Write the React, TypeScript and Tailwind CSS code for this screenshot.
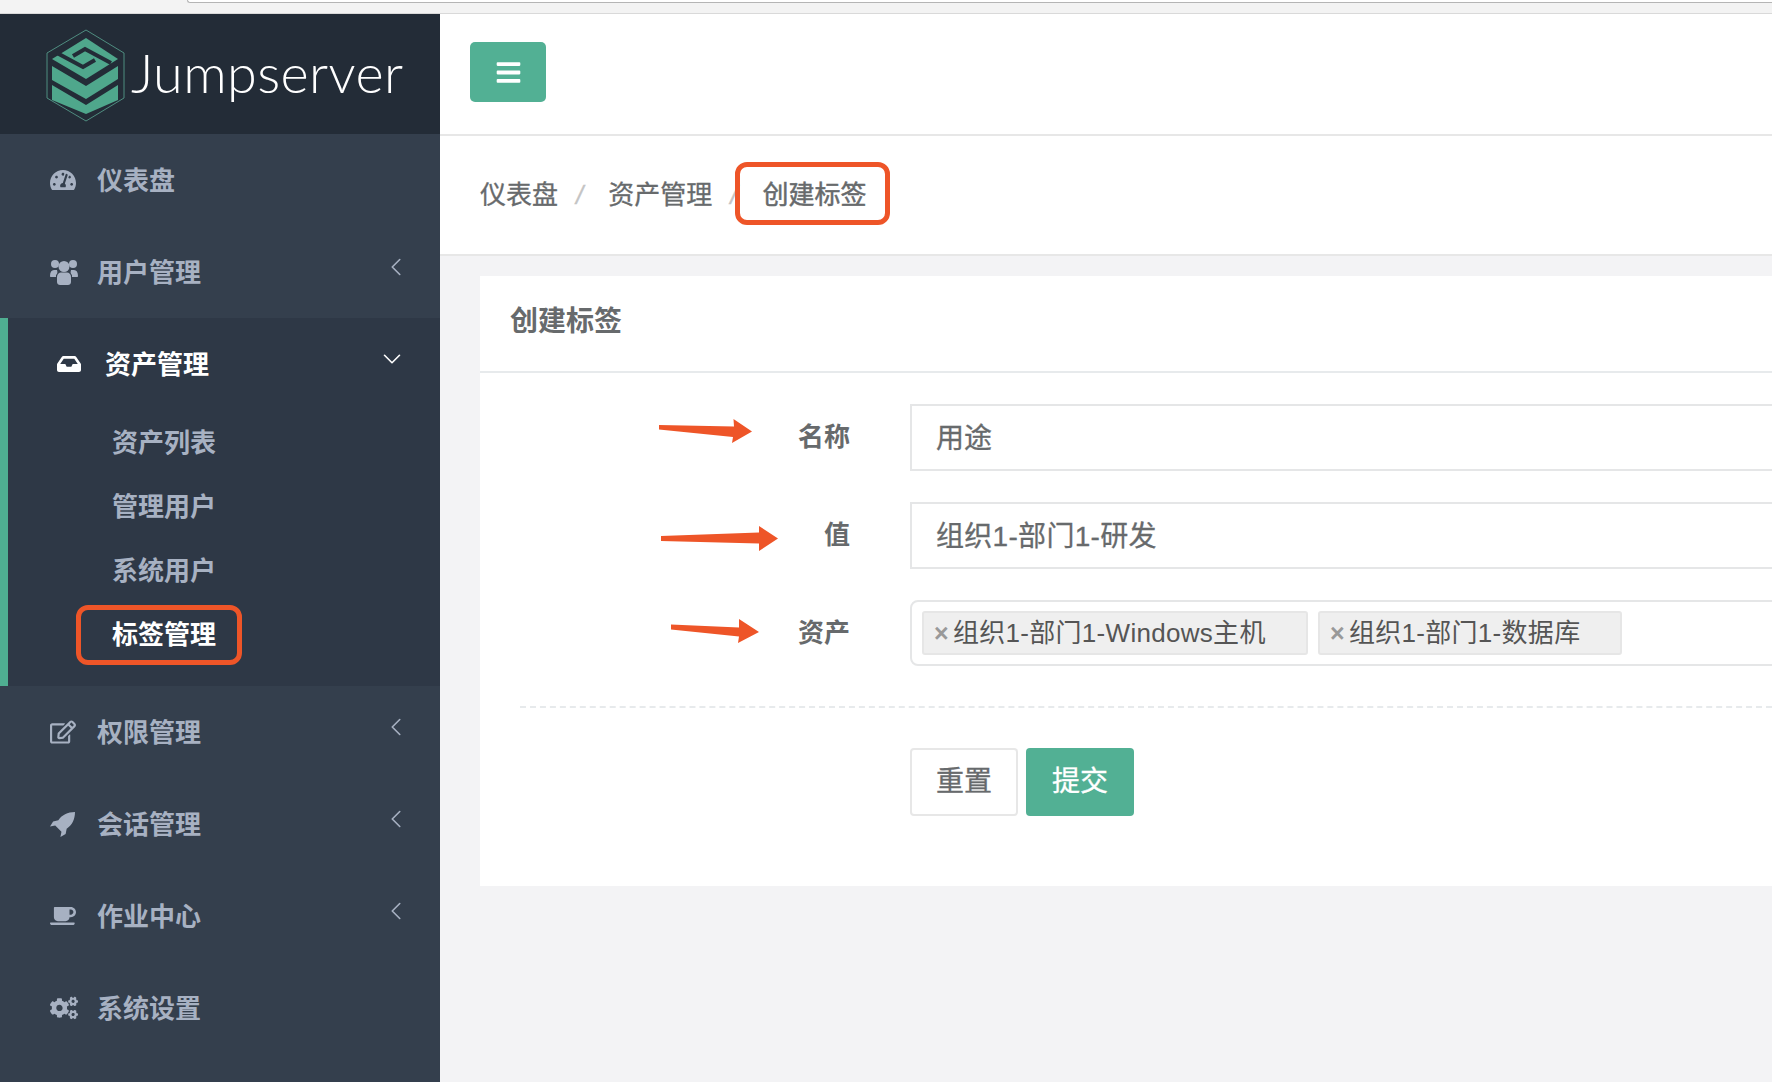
import React from 'react';
import { FaTachometerAlt, FaInbox, FaRegEdit, FaCoffee, FaCogs, FaBars } from 'react-icons/fa';
import { ChevronLeft, ChevronDown } from 'lucide-react';

const cjk = 'font-["Liberation_Sans","Noto_Sans_CJK_SC",sans-serif]';

const UsersIcon = () => (
  <svg width="28" height="26" viewBox="0 0 28 26" fill="currentColor">
    <circle cx="5" cy="5" r="4" />
    <circle cx="23" cy="5" r="4" />
    <circle cx="14" cy="7.5" r="5.5" />
    <path d="M0 17c0-4 1.500-6 4-6h3c1 3 0 4-1 5v2H1c-.6 0-1-.4-1-1zM28 17c0-4-1.500-6-4-6h-3c-1 3 0 4 1 5v2h5c.6 0 1-.4 1-1z" />
    <path d="M7 23v-5c0-3 2-4.500 4-4.500h6c2 0 4 1.500 4 4.500v5c0 2-1.500 3-3 3h-8c-1.500 0-3-1-3-3z" />
  </svg>
);

const RocketIcon = () => (
  <svg width="25" height="25" viewBox="0 0 24 24" fill="currentColor">
    <path d="M24 0C17 0 11 3 8 8L3 9 0 14l5-1 6 6-1 5 5-3 1-5c5-3 8-9 8-16z" />
  </svg>
);

const NavItem: React.FC<{ icon: React.ReactNode; label: string; arrow?: boolean }> = ({ icon, label, arrow }) => (
  <div className="flex h-[92px] items-center pl-[50px] pr-[29px] text-[#a7b1c2]">
    <span className="flex w-[47px] shrink-0 items-center">{icon}</span>
    <span className="flex-1 pt-[2px] text-[26px] font-bold">{label}</span>
    {arrow && <ChevronLeft className="mb-[10px] h-[30px] w-[30px]" strokeWidth={1.3} />}
  </div>
);

const Logo = () => (
  <svg width="80" height="93" viewBox="6 5 80 93" className="mt-[3px] shrink-0">
    <polygon points="46,6 84,29 84,74 46,97 7,74 7,29" fill="none" stroke="#4f8d80" strokeWidth="1" />
    <polygon points="46,14 78,35 46,55 12,35" fill="#4fa78c" />
    <path d="M17 29 L43 43 L55 36 M71 39 L45 25 L33 32" stroke="#232c37" strokeWidth="4" fill="none" />
    <polygon points="12,42 46,62 78,42 78,55 46,75 12,56" fill="#4fa78c" />
    <polygon points="12,61 46,81 78,61 78,76 46,90 12,76" fill="#4fa78c" />
  </svg>
);

const Chip: React.FC<{ label: string; width: string }> = ({ label, width }) => (
  <span className={`flex h-[44px] items-center rounded-[3px] border-2 border-[#e6e6e6] bg-[#efefef] pl-[10px] text-[26px] tracking-[0.3px] text-[#555] ${width}`}>
    <span className="mr-[4px] text-[25px] leading-none font-bold text-[#999]">×</span>
    {label}
  </span>
);

const FormRow: React.FC<{ label: string; children: React.ReactNode; rowClass: string }> = ({ label, children, rowClass }) => (
  <div className={`flex items-center ${rowClass}`}>
    <label className="w-[330px] shrink-0 text-right text-[26px] font-bold text-[#676a6c]">{label}</label>
    <div className="ml-[60px] mr-[-20px] flex-1">{children}</div>
  </div>
);

export default function App() {
  return (
    <div className={`relative flex h-[1082px] w-[1772px] flex-col overflow-hidden bg-[#f3f3f5] ${cjk}`}>
      {/* Browser chrome sliver */}
      <div className="h-[14px] shrink-0 border-b border-[#d9d9d9] bg-[#f3f3f3]">
        <div className="ml-[187px] h-[3px] rounded-bl-[4px] border-b border-l border-[#b5b5b5] bg-white" />
      </div>

      <div className="flex flex-1">
        {/* Sidebar */}
        <aside className="flex w-[440px] shrink-0 flex-col bg-[#343f4d]">
          <div className="flex h-[120px] items-center gap-[5px] bg-[#232c37] pl-[46px]">
            <Logo />
            <span className="mb-[2px] font-['Lato'] text-[54px] leading-none font-light tracking-[0.4px] text-white">Jumpserver</span>
          </div>

          <NavItem icon={<FaTachometerAlt size={26} />} label="仪表盘" />
          <NavItem icon={<UsersIcon />} label="用户管理" arrow />

          <div className="border-l-[8px] border-[#4fae91] bg-[#2e3846]">
            <div className="flex h-[92px] items-center pl-[49px] pr-[33px] text-white">
              <span className="flex w-[48px] shrink-0 items-center"><FaInbox size={24} /></span>
              <span className="flex-1 pt-[2px] text-[26px] font-bold">资产管理</span>
              <ChevronDown className="mb-[10px] h-[30px] w-[30px]" strokeWidth={1.3} />
            </div>
            <div className="flex flex-col pb-[19px] pl-[104px] pt-[1px] text-[26px] font-bold leading-[64px] text-[#a7b1c2]">
              <span>资产列表</span>
              <span>管理用户</span>
              <span>系统用户</span>
              <span className="text-white">标签管理</span>
            </div>
          </div>

          <NavItem icon={<FaRegEdit size={26} />} label="权限管理" arrow />
          <NavItem icon={<RocketIcon />} label="会话管理" arrow />
          <NavItem icon={<FaCoffee size={26} />} label="作业中心" arrow />
          <NavItem icon={<FaCogs size={28} />} label="系统设置" />
        </aside>

        {/* Main */}
        <main className="flex min-w-0 flex-1 flex-col overflow-hidden">
          <div className="flex h-[122px] shrink-0 items-center border-b-2 border-[#e7e7e7] bg-white pb-[4px] pl-[30px]">
            <button className="flex h-[60px] w-[76px] items-center justify-center rounded-[5px] bg-[#52b094] text-white">
              <FaBars size={27} />
            </button>
          </div>

          <div className="flex h-[120px] shrink-0 items-center border-b-2 border-[#e7e7e7] bg-white pl-[40px] text-[26px] text-[#676a6c] [-webkit-text-stroke:0.3px]">
            <span>仪表盘</span>
            <span className="ml-[18px] mr-[25px] text-[#c4c4c4] italic">/</span>
            <span>资产管理</span>
            <span className="ml-[18px] mr-[25px] text-[#c4c4c4] italic">/</span>
            <span className="relative [-webkit-text-stroke:0.5px]">
              创建标签
              <span className="absolute top-[-14px] right-[-23px] bottom-[-10px] left-[-28px] rounded-[12px] border-[5px] border-[#ee5528]" />
            </span>
          </div>

          <div className="ml-[40px] mt-[20px] h-[610px] bg-white">
            <div className="flex h-[97px] items-center border-b-2 border-[#e7eaec] pb-[4px] pl-[30px] text-[28px] font-bold text-[#676a6c]">
              创建标签
            </div>
            <div className="pl-[40px] pt-[31px]">
              <FormRow label="名称" rowClass="mb-[31px]">
                <div className="flex h-[67px] items-center border-2 border-[#e5e6e7] pl-[24px] pt-[2px] text-[28px] text-[#676a6c] [-webkit-text-stroke:0.3px]">用途</div>
              </FormRow>
              <FormRow label="值" rowClass="mb-[31px]">
                <div className="flex h-[67px] items-center border-2 border-[#e5e6e7] pl-[24px] pt-[2px] text-[28px] tracking-[0.3px] text-[#676a6c] [-webkit-text-stroke:0.3px]">组织1-部门1-研发</div>
              </FormRow>
              <FormRow label="资产" rowClass="">
                <div className="flex h-[66px] items-center gap-[10px] rounded-l-[8px] border-2 border-[#e5e6e7] pl-[10px]">
                  <Chip label="组织1-部门1-Windows主机" width="w-[386px]" />
                  <Chip label="组织1-部门1-数据库" width="w-[304px]" />
                </div>
              </FormRow>
              <div className="mt-[40px] border-t-2 border-dashed border-[#e7eaec]" />
              <div className="ml-[390px] mt-[40px] flex gap-[8px]">
                <button className="h-[68px] w-[108px] rounded-[4px] border-2 border-[#e7e7e7] bg-white text-[28px] text-[#676a6c] [-webkit-text-stroke:0.3px]">重置</button>
                <button className="h-[68px] w-[108px] rounded-[4px] bg-[#52b094] text-[28px] text-white [-webkit-text-stroke:0.3px]">提交</button>
              </div>
            </div>
          </div>
        </main>
      </div>

      {/* Red annotation box + arrows drawn on top of the screenshot */}
      <div className="absolute top-[605px] left-[76px] h-[60px] w-[166px] rounded-[12px] border-[5px] border-[#ee5528]" />
      <svg className="pointer-events-none absolute top-0 left-0" width="1772" height="1082">
        <polygon points="659,425 734,426.500 733.500,419 752,431.500 732,443 733,437 659,429.500" fill="#ee5528" />
        <polygon points="661,536 759,532.500 759,526 778,538.500 759,551 759,543.500 661,541" fill="#ee5528" />
        <polygon points="671,624.500 739,627.500 739,619 759,632 738,643 739,636.500 671,629.500" fill="#ee5528" />
      </svg>
    </div>
  );
}
